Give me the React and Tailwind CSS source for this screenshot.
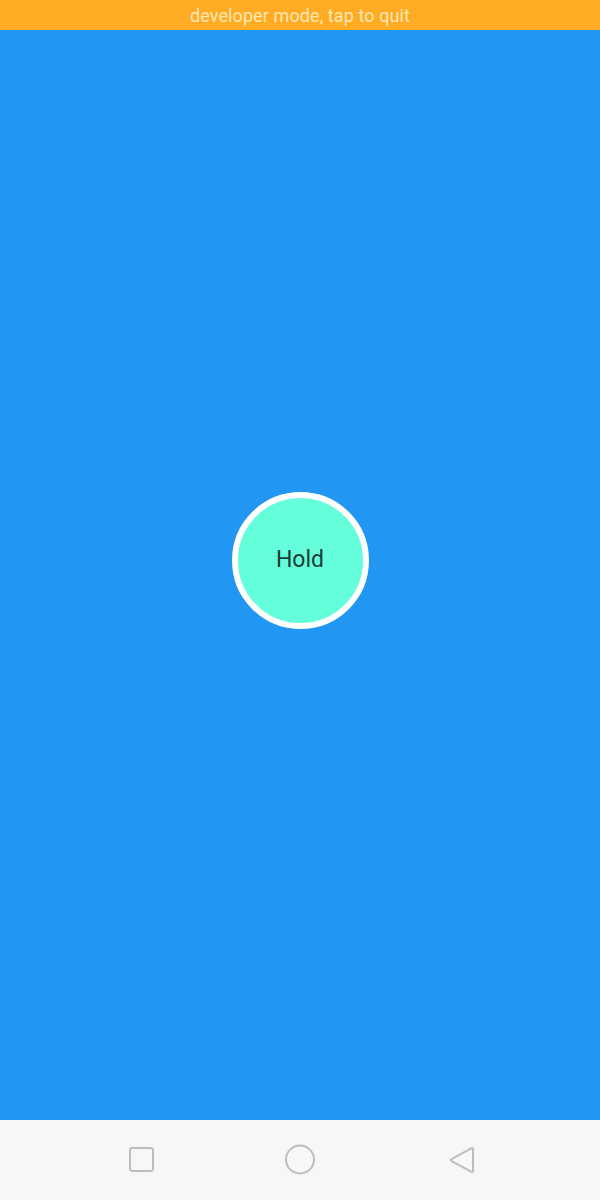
export default function App() {
  return (
    <div className="flex h-[1200px] w-[600px] flex-col overflow-hidden" style={{ fontFamily: 'Roboto, "Noto Sans", sans-serif' }}>
      <div className="flex h-[30px] shrink-0 items-center justify-center bg-[#ffac24] pt-[1px] text-[18px] tracking-[0.1px] text-[#ffe7b3]">
        developer mode, tap to quit
      </div>
      <div className="flex flex-1 items-center justify-center bg-[#2196f3] pb-[30px]">
        <div className="flex h-[137px] w-[137px] items-center justify-center rounded-full border-[6px] border-white bg-[#64ffda] text-[23px] text-[#1b3b35]">
          Hold
        </div>
      </div>
      <div className="flex h-[80px] shrink-0 items-center justify-center bg-[#f7f7f7]">
        <div className="grid grid-cols-[32px_32px_32px] gap-[127px]">
          <svg width="32" height="32" viewBox="0 0 32 32">
            <rect x="5" y="4" width="23" height="23" rx="2.5" fill="none" stroke="#bdbdbd" strokeWidth="2" />
          </svg>
          <svg width="32" height="32" viewBox="0 0 32 32">
            <circle cx="16" cy="15.5" r="14" fill="none" stroke="#bdbdbd" strokeWidth="2" />
          </svg>
          <svg width="32" height="32" viewBox="0 0 32 32">
            <path d="M30 5.5 L30 26.5 Q30 28.6 28.2 27.6 L8.6 17.1 Q7 16.2 8.6 15.2 L28.2 4.4 Q30 3.4 30 5.5 Z" fill="none" stroke="#bdbdbd" strokeWidth="2" strokeLinejoin="round" />
          </svg>
        </div>
      </div>
    </div>
  );
}
